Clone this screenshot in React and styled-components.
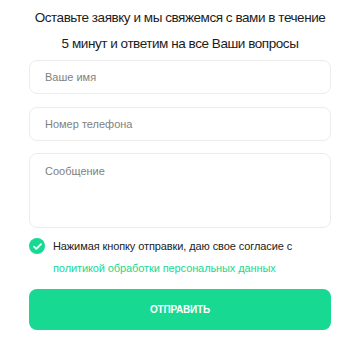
import React from 'react';
import styled, { createGlobalStyle } from 'styled-components';

const GREEN = '#17d992';
const FONT = '"Liberation Sans", Arial, sans-serif';

const Global = createGlobalStyle`
  body {
    margin: 0;
    background: #fff;
    font-family: ${FONT};
  }
  * { box-sizing: border-box; }
`;

const Form = styled.form`
  width: 360px;
  padding: 5px 29px 0;
  display: flex;
  flex-direction: column;
`;

const Title = styled.h2`
  margin: 0 0 3px;
  font-size: 13.5px;
  font-weight: 400;
  line-height: 26px;
  color: #1c1c1c;
  text-align: center;
  white-space: nowrap;
  letter-spacing: -0.45px;
`;

const Field = styled.input`
  height: 34px;
  width: 100%;
  margin-bottom: ${p => p.$gap || 13}px;
  padding: 0 15px;
  border: 1px solid #ececec;
  border-radius: 8px;
  font: 400 11px ${FONT};
  color: #333;
  outline: none;
  &::placeholder { color: #7f7f7f; }
`;

const Area = styled.textarea`
  height: 75px;
  width: 100%;
  padding: 11px 15px;
  border: 1px solid #ececec;
  border-radius: 8px;
  resize: none;
  font: 400 11px ${FONT};
  outline: none;
  &::placeholder { color: #7f7f7f; }
`;

const Consent = styled.label`
  display: flex;
  gap: 8px;
  margin-top: 7px;
  font-size: 11px;
  line-height: 22px;
  letter-spacing: -0.1px;
  color: #222;
  white-space: nowrap;
`;

const Check = styled.span`
  flex: none;
  width: 16px;
  height: 16px;
  margin-top: 3px;
  border-radius: 50%;
  background: ${GREEN};
  display: flex;
  align-items: center;
  justify-content: center;
`;

const Link = styled.a`
  color: ${GREEN};
  text-decoration: none;
`;

const Submit = styled.button`
  margin-top: 10px;
  height: 41px;
  width: 100%;
  border: none;
  border-radius: 8px;
  background: ${GREEN};
  color: #fff;
  font: 700 10px ${FONT};
  letter-spacing: -0.2px;
`;

export default function App() {
  return (
    <>
      <Global />
      <Form onSubmit={e => e.preventDefault()}>
        <Title>
          Оставьте заявку и мы свяжемся с вами в течение
          <br />
          5 минут и ответим на все Ваши вопросы
        </Title>
        <Field placeholder="Ваше имя" />
        <Field placeholder="Номер телефона" $gap={12} />
        <Area placeholder="Сообщение" />
        <Consent>
          <Check>
            <svg width="9" height="7" viewBox="0 0 9 7">
              <path d="M1 3.6 L3.3 5.8 L8 1.2" fill="none" stroke="#fff" strokeWidth="1.8" strokeLinecap="round" strokeLinejoin="round" />
            </svg>
          </Check>
          <span>
            Нажимая кнопку отправки, даю свое согласие с
            <br />
            <Link href="#">политикой обработки персональных данных</Link>
          </span>
        </Consent>
        <Submit type="submit">ОТПРАВИТЬ</Submit>
      </Form>
    </>
  );
}
